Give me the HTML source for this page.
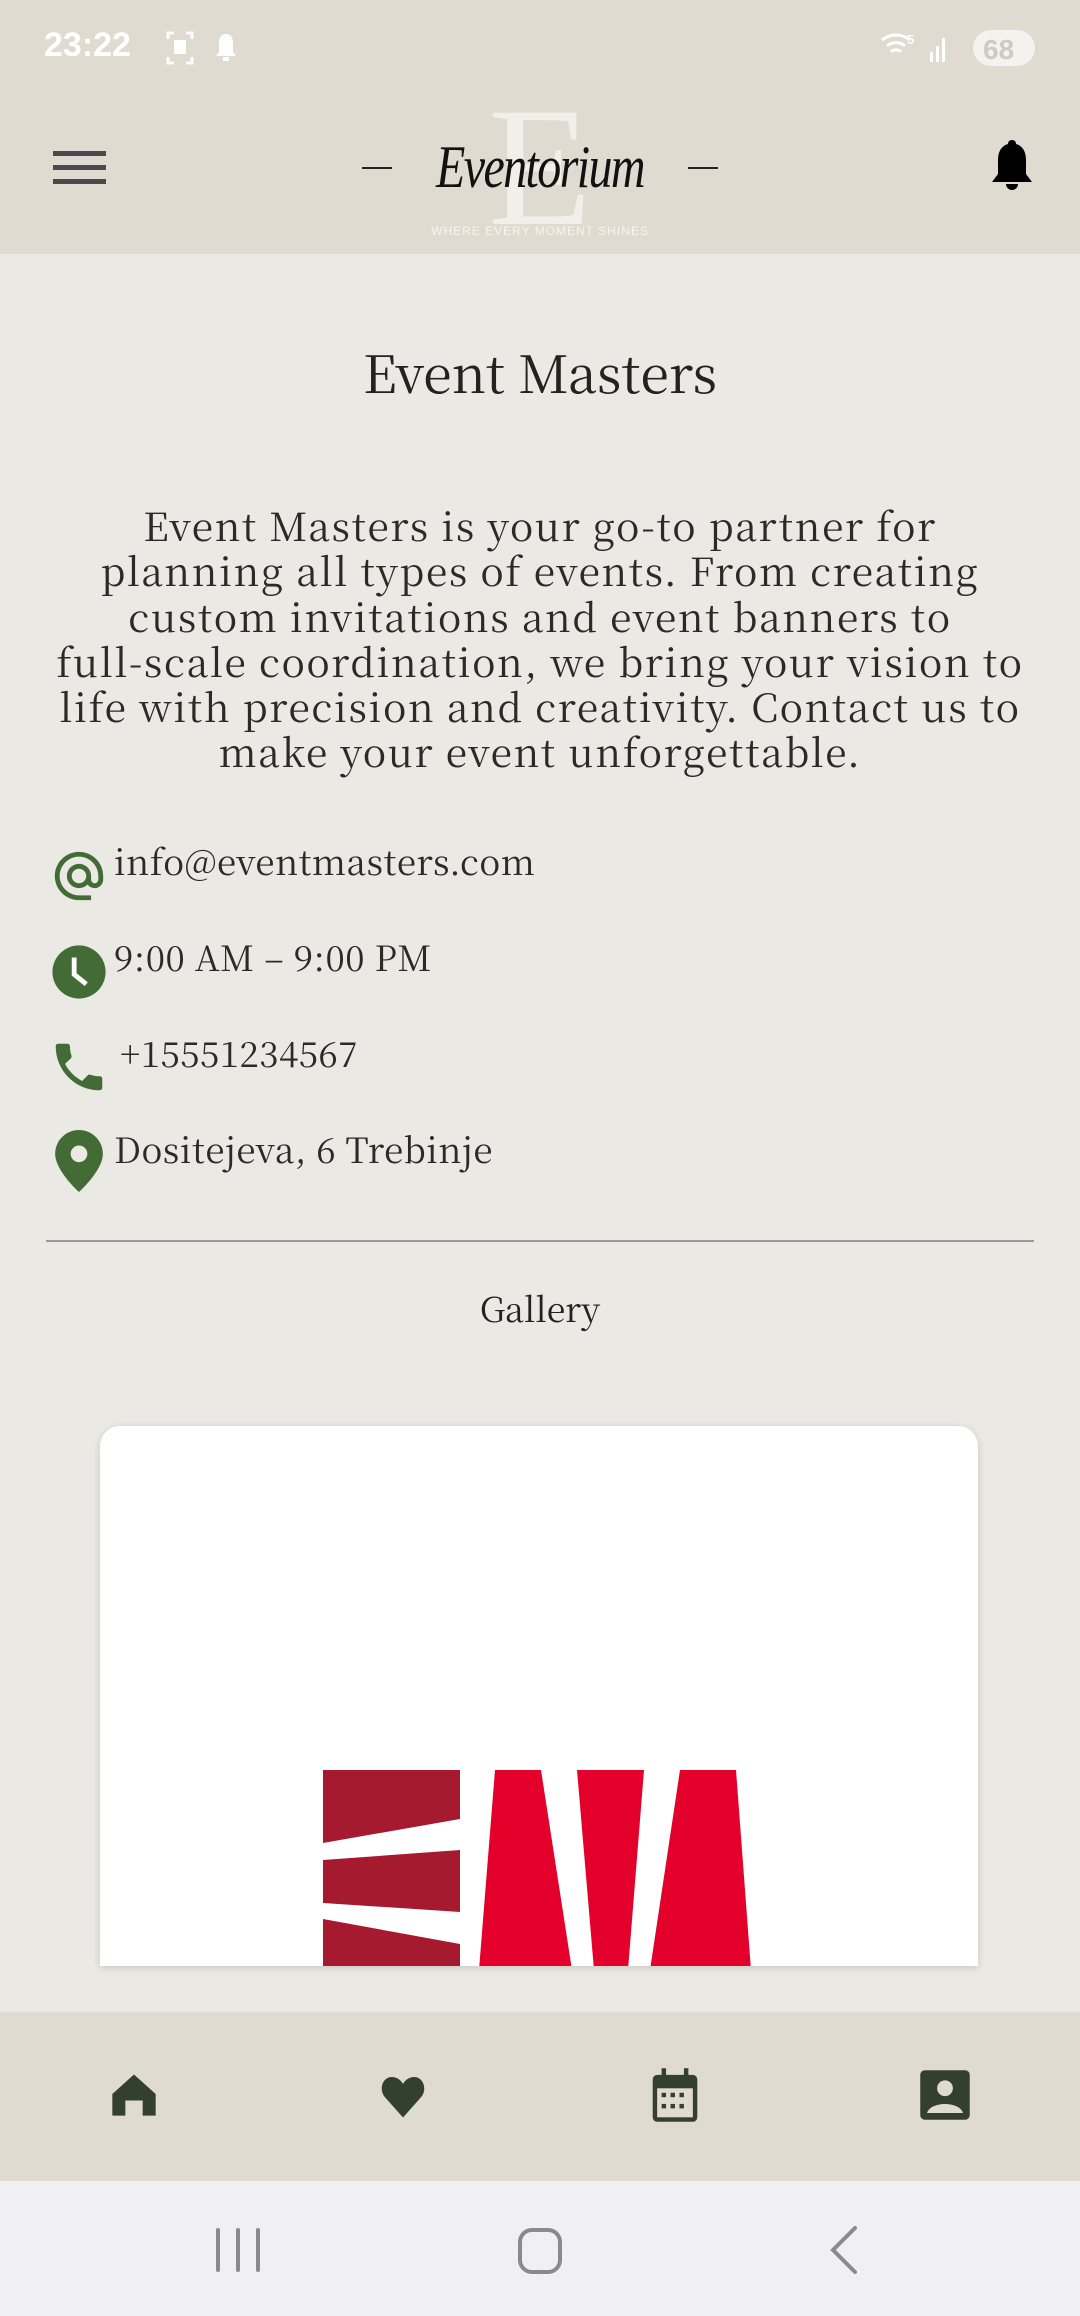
<!DOCTYPE html>
<html><head><meta charset="utf-8"><style>
*{margin:0;padding:0;box-sizing:border-box}
body{width:1080px;height:2316px;background:#ebe9e4;position:relative;overflow:hidden;font-family:"Noto Serif CJK SC","Liberation Serif",serif;color:#222}
.abs{position:absolute}
#hdr{left:0;top:0;width:1080px;height:254px;background:#e0dbd0}
.title{left:0;width:1080px;text-align:center}
.ct{left:114px;font-size:35px;color:#2a2a2a;line-height:40px;white-space:nowrap;letter-spacing:0.5px}
.p{white-space:nowrap}
</style></head><body>
<div id="hdr" class="abs"></div>
<div class="abs" style="left:44px;top:26px;font:bold 34px 'Liberation Sans',sans-serif;color:#fff">23:22</div>
<svg class="abs" style="left:166px;top:30px" width="80" height="36" viewBox="0 0 80 36"><g fill="none" stroke="#fff" stroke-width="3"><path d="M2 9V3h6M20 3h6v6M26 27v6h-6M8 33H2v-6"/></g><rect x="8" y="10" width="12" height="14" fill="#fff"/><path d="M60 4c-5 0-7 4-7 9v9l-3 4h20l-3-4v-9c0-5-2-9-7-9z" fill="#fff"/><rect x="57" y="27" width="6" height="4" fill="#fff"/></svg>
<svg class="abs" style="left:880px;top:28px" width="160" height="40" viewBox="0 0 160 40"><g fill="none" stroke="#fff" stroke-width="3"><path d="M2 12a22 22 0 0 1 28 0M7 18a14 14 0 0 1 18 0M11 24a7 7 0 0 1 10 0"/></g><text x="27" y="16" font-size="13" font-family="Liberation Sans" font-weight="bold" fill="#fff">5</text><g fill="#fff"><rect x="50" y="24" width="3" height="10"/><rect x="56" y="18" width="3" height="16"/><rect x="62" y="10" width="3" height="24"/></g><rect x="93" y="2" width="62" height="36" rx="18" fill="#f4f2ee"/><text x="103" y="31" font-size="28" font-weight="bold" font-family="Liberation Sans" fill="#cfcac0">68</text></svg>
<div class="abs" style="left:53px;top:151px;width:53px;height:5px;background:#4a4850"></div>
<div class="abs" style="left:53px;top:165px;width:53px;height:5px;background:#4a4850"></div>
<div class="abs" style="left:53px;top:179px;width:53px;height:5px;background:#4a4850"></div>
<div class="abs" style="left:488px;top:82px;font-size:170px;line-height:170px;color:#f1efea;font-family:'Liberation Serif',serif">E</div>
<div class="abs" style="left:380px;top:134px;width:320px;text-align:center;font-size:60px;line-height:66px;font-style:italic;font-family:'Liberation Serif',serif;color:#111;letter-spacing:-2px;transform:scaleX(0.8)">Eventorium</div>
<div class="abs" style="left:362px;top:167px;width:30px;height:2px;background:#222"></div>
<div class="abs" style="left:688px;top:167px;width:30px;height:2px;background:#222"></div>
<div class="abs" style="left:430px;top:224px;width:220px;text-align:center;font:12px 'Liberation Sans',sans-serif;color:#f6f4f0;letter-spacing:1px">WHERE EVERY MOMENT SHINES</div>
<svg class="abs" style="left:990px;top:138px" width="44" height="54" viewBox="0 0 44 54"><path d="M22 2c-3 0-4 2-4 4-7 2-10 8-10 16v14l-6 8h40l-6-8V22c0-8-3-14-10-16 0-2-1-4-4-4z"/><path d="M16 46a6 6 0 0 0 12 0z"/></svg>

<div class="abs title" style="top:336px;font-size:52px;line-height:70px">Event Masters</div>
<div class="abs title" style="top:503px;font-size:39px;line-height:45.3px;color:#2a2a2a;letter-spacing:1.6px">
<div class="p">Event Masters is your go-to partner for</div>
<div class="p">planning all types of events. From creating</div>
<div class="p">custom invitations and event banners to</div>
<div class="p">full-scale coordination, we bring your vision to</div>
<div class="p">life with precision and creativity. Contact us to</div>
<div class="p">make your event unforgettable.</div>
</div>

<svg class="abs" style="left:50px;top:845px" width="58" height="62" viewBox="0 0 24 24"><path fill="#436b36" d="M12 2C6.48 2 2 6.48 2 12s4.48 10 10 10h5v-2h-5c-4.34 0-8-3.66-8-8s3.66-8 8-8 8 3.66 8 8v1.43c0 .79-.71 1.57-1.5 1.57s-1.5-.78-1.5-1.57V12c0-2.76-2.24-5-5-5s-5 2.24-5 5 2.24 5 5 5c1.38 0 2.64-.56 3.54-1.47.65.89 1.77 1.470 2.96 1.47 1.97 0 3.5-1.6 3.5-3.57V12c0-5.52-4.48-10-10-10zm0 13c-1.66 0-3-1.34-3-3s1.34-3 3-3 3 1.34 3 3-1.34 3-3 3z"/></svg>
<div class="abs ct" style="top:841px">info@eventmasters.com</div>
<svg class="abs" style="left:50px;top:943px" width="58" height="58" viewBox="0 0 24 24"><circle cx="12" cy="12" r="11" fill="#436b36"/><path d="M10 6v7l5 4" stroke="#fff" stroke-width="2" fill="none"/></svg>
<div class="abs ct" style="top:937px">9:00 AM – 9:00 PM</div>
<svg class="abs" style="left:48px;top:1036px" width="62" height="62" viewBox="0 0 24 24"><path fill="#436b36" d="M6.6 10.8c1.4 2.8 3.8 5.1 6.6 6.6l2.2-2.2c.3-.3.7-.4 1-.2 1.1.4 2.3.6 3.6.6.6 0 1 .4 1 1V20c0 .6-.4 1-1 1C10.6 21 3 13.4 3 4c0-.6.4-1 1-1h3.5c.6 0 1 .4 1 1 0 1.3.2 2.5.6 3.6.1.3 0 .7-.2 1z"/></svg>
<div class="abs ct" style="top:1033px;left:120px">+15551234567</div>
<svg class="abs" style="left:54px;top:1130px" width="50" height="62" viewBox="0 0 20 26"><path fill="#436b36" d="M10 0C4.5 0 0 4.5 0 10c0 7 10 16 10 16s10-9 10-16C20 4.5 15.5 0 10 0zm0 13.5a3.5 3.5 0 1 1 0-7 3.5 3.5 0 0 1 0 7z"/></svg>
<div class="abs ct" style="top:1129px">Dositejeva, 6 Trebinje</div>

<div class="abs" style="left:46px;top:1240px;width:988px;height:2px;background:#9a9a98"></div>
<div class="abs title" style="top:1286px;font-size:34px;line-height:44px">Gallery</div>

<div class="abs" style="left:100px;top:1426px;width:878px;height:540px;background:#fff;border-radius:20px 20px 0 0;box-shadow:0 2px 8px rgba(0,0,0,.15);overflow:hidden">
<svg width="878" height="540" viewBox="100 1426 878 540" style="display:block">
<path fill="#a51a2e" d="M323 1770h137v49l-137 24zM323 1860l137-10v62l-137-9zM323 1919l137 25v30H323z"/>
<path fill="#e3002b" d="M495 1770h46l31 200h-93zM577 1770h67l-16 200h-34zM680 1770h56l15 200H650z"/>
</svg></div>

<div class="abs" style="left:0;top:2012px;width:1080px;height:169px;background:#e0dbd0"></div>
<svg class="abs" style="left:108px;top:2068px" width="52" height="52" viewBox="0 0 24 24"><path fill="#34402e" d="M12 3L2 12v10h6v-7h8v7h6V12z"/></svg>
<svg class="abs" style="left:376px;top:2068px" width="54" height="54" viewBox="0 0 24 24"><path fill="#34402e" d="M12 22l-8-9C1 9.5 3 4 7 4c2.5 0 4 1.5 5 3 1-1.5 2.5-3 5-3 4 0 6 5.5 3 9z"/></svg>
<svg class="abs" style="left:648px;top:2066px" width="54" height="58" viewBox="0 0 24 26"><rect x="2" y="4" width="20" height="21" rx="2" fill="#34402e"/><rect x="6" y="1" width="2" height="5" fill="#34402e"/><rect x="16" y="1" width="2" height="5" fill="#34402e"/><rect x="4" y="10" width="16" height="13" fill="#e0dbd0"/><g fill="#34402e"><rect x="6" y="12" width="2" height="2"/><rect x="10" y="12" width="2" height="2"/><rect x="14" y="12" width="2" height="2"/><rect x="6" y="17" width="2" height="2"/><rect x="10" y="17" width="2" height="2"/><rect x="14" y="17" width="2" height="2"/></g></svg>
<svg class="abs" style="left:918px;top:2068px" width="54" height="54" viewBox="0 0 24 24"><rect x="1" y="1" width="22" height="22" rx="2" fill="#34402e"/><circle cx="12" cy="9" r="3.5" fill="#e0dbd0"/><path d="M4 20c1-3 5-4 8-4s7 1 8 4z" fill="#e0dbd0"/></svg>

<div class="abs" style="left:0;top:2181px;width:1080px;height:135px;background:#f0f0f2"></div>
<svg class="abs" style="left:200px;top:2220px" width="700" height="60" viewBox="0 0 700 60"><g stroke="#8a8a8c" stroke-width="4" fill="none" stroke-linecap="round"><path d="M18 10v40M38 10v40M58 10v40"/><rect x="320" y="10" width="40" height="42" rx="12"/><path d="M655 8l-22 22 22 22"/></g></svg>
</body></html>
